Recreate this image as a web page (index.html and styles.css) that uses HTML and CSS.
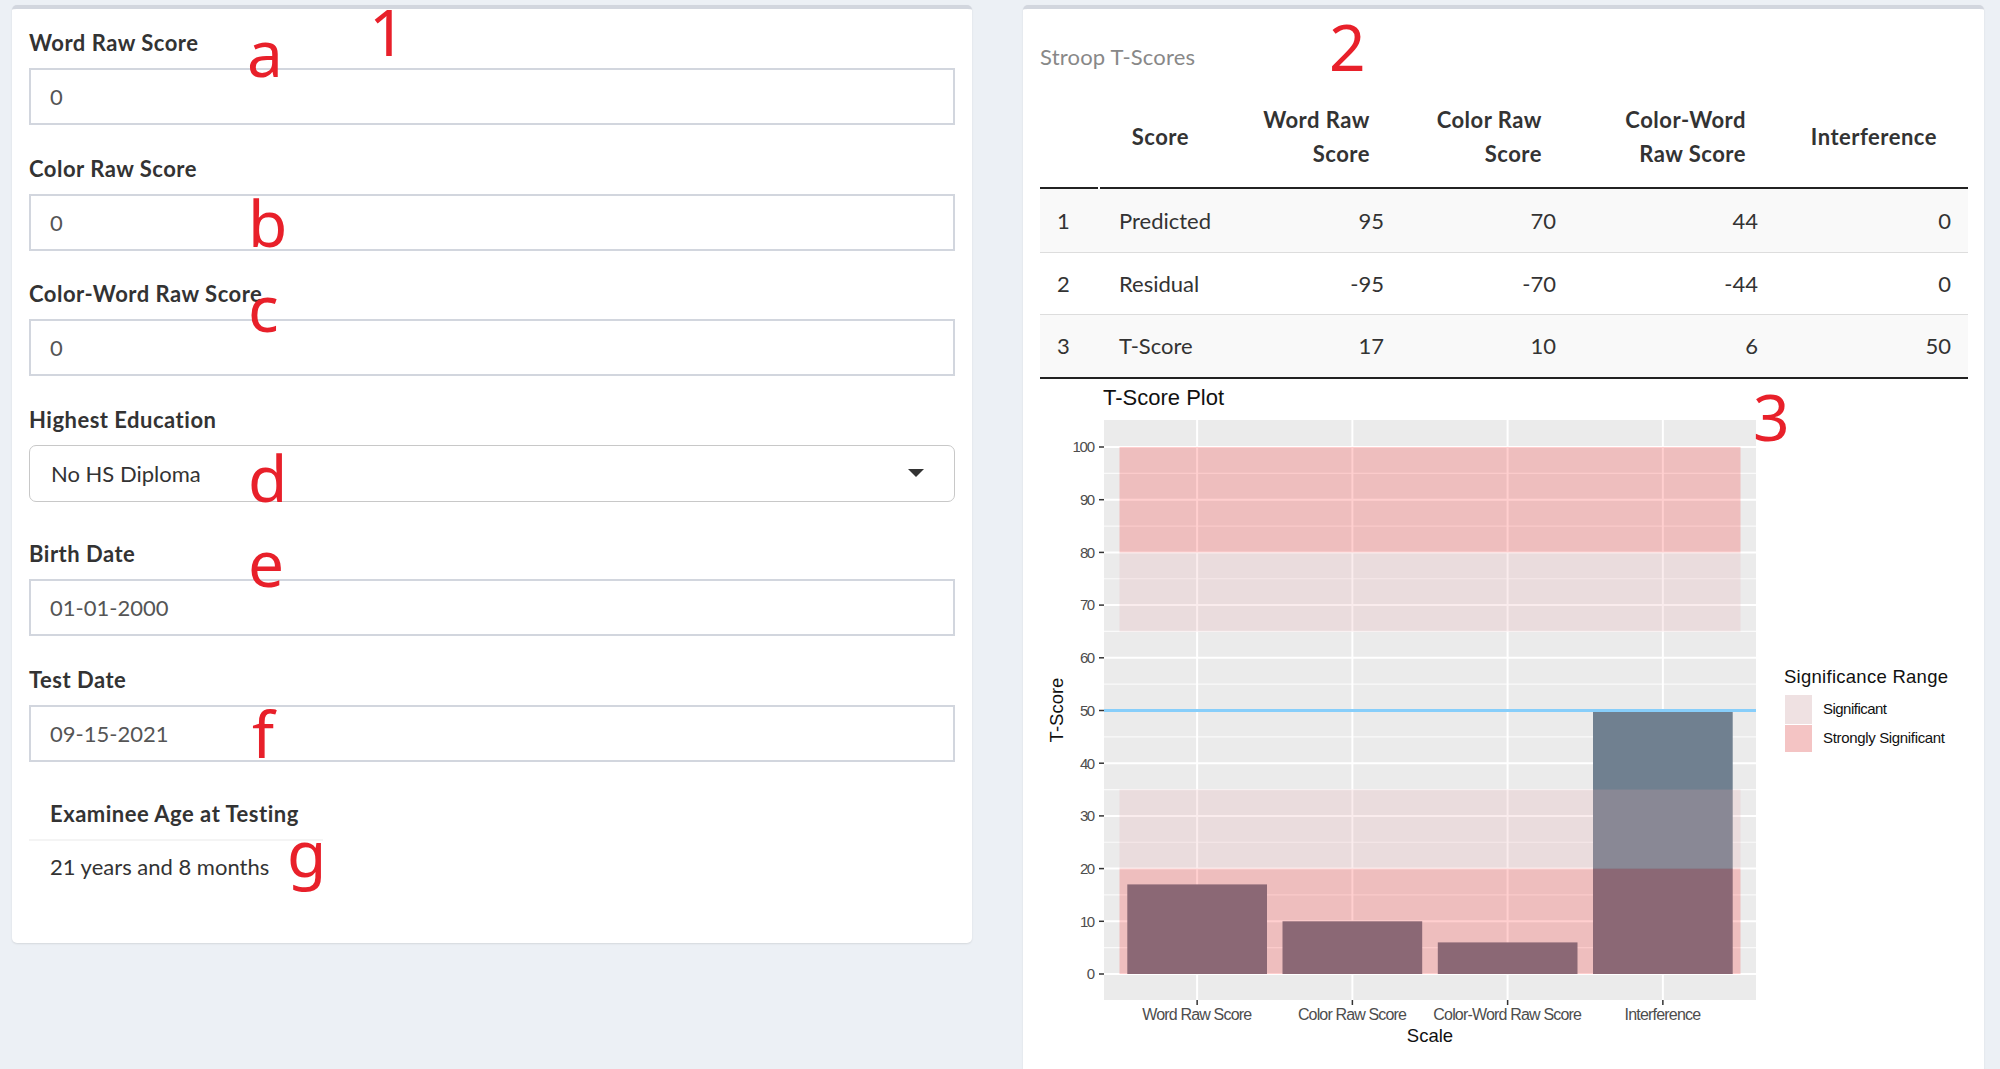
FILE: index.html
```html
<!DOCTYPE html>
<html lang="en">
<head>
<meta charset="utf-8">
<title>Stroop T-Scores</title>
<link rel="stylesheet" href="styles.css">
</head>
<body>
<div class="page">
  <section class="box box-left">
    <div class="field">
      <label class="field-label">Word Raw Score</label>
      <div class="input">0</div>
    </div>
    <div class="field">
      <label class="field-label">Color Raw Score</label>
      <div class="input">0</div>
    </div>
    <div class="field">
      <label class="field-label">Color-Word Raw Score</label>
      <div class="input">0</div>
    </div>
    <div class="field field-select">
      <label class="field-label">Highest Education</label>
      <div class="input select"><span>No HS Diploma</span><span class="caret"></span></div>
    </div>
    <div class="field">
      <label class="field-label">Birth Date</label>
      <div class="input">01-01-2000</div>
    </div>
    <div class="field field-last">
      <label class="field-label">Test Date</label>
      <div class="input">09-15-2021</div>
    </div>
    <table class="age-table">
      <thead><tr><th>Examinee Age at Testing</th></tr></thead>
      <tbody><tr><td>21 years and 8 months</td></tr></tbody>
    </table>
  </section>

  <section class="box box-right">
    <div class="caption">Stroop T-Scores</div>
    <div class="dt">
      <div class="trow thead">
        <div class="h0"></div>
        <div>Score</div>
        <div>Word Raw<br>Score</div>
        <div>Color Raw<br>Score</div>
        <div class="h4">Color-Word<br>Raw Score</div>
        <div>Interference</div>
      </div>
      <div class="trow tr r1">
        <div class="c-idx">1</div><div class="c-txt">Predicted</div>
        <div class="c-num">95</div><div class="c-num">70</div><div class="c-num">44</div><div class="c-num">0</div>
      </div>
      <div class="trow tr r2">
        <div class="c-idx">2</div><div class="c-txt">Residual</div>
        <div class="c-num">-95</div><div class="c-num">-70</div><div class="c-num">-44</div><div class="c-num">0</div>
      </div>
      <div class="trow tr r3">
        <div class="c-idx">3</div><div class="c-txt">T-Score</div>
        <div class="c-num">17</div><div class="c-num">10</div><div class="c-num">6</div><div class="c-num">50</div>
      </div>
    </div>
    <svg class="plot" viewBox="1040 379 928 690" width="928" height="690" xmlns="http://www.w3.org/2000/svg">
      <text class="p-title" x="1103" y="405">T-Score Plot</text>
      <rect x="1104" y="420" width="652" height="580" fill="#ebebeb"/>
      <g class="grid-minor">
        <line x1="1104" x2="1756" y1="947.65" y2="947.65"/>
        <line x1="1104" x2="1756" y1="894.95" y2="894.95"/>
        <line x1="1104" x2="1756" y1="842.25" y2="842.25"/>
        <line x1="1104" x2="1756" y1="789.55" y2="789.55"/>
        <line x1="1104" x2="1756" y1="736.85" y2="736.85"/>
        <line x1="1104" x2="1756" y1="684.15" y2="684.15"/>
        <line x1="1104" x2="1756" y1="631.45" y2="631.45"/>
        <line x1="1104" x2="1756" y1="578.75" y2="578.75"/>
        <line x1="1104" x2="1756" y1="526.05" y2="526.05"/>
        <line x1="1104" x2="1756" y1="473.35" y2="473.35"/>
      </g>
      <g class="grid-major">
        <line x1="1104" x2="1756" y1="974" y2="974"/>
        <line x1="1104" x2="1756" y1="921.3" y2="921.3"/>
        <line x1="1104" x2="1756" y1="868.6" y2="868.6"/>
        <line x1="1104" x2="1756" y1="815.9" y2="815.9"/>
        <line x1="1104" x2="1756" y1="763.2" y2="763.2"/>
        <line x1="1104" x2="1756" y1="710.5" y2="710.5"/>
        <line x1="1104" x2="1756" y1="657.8" y2="657.8"/>
        <line x1="1104" x2="1756" y1="605.1" y2="605.1"/>
        <line x1="1104" x2="1756" y1="552.4" y2="552.4"/>
        <line x1="1104" x2="1756" y1="499.7" y2="499.7"/>
        <line x1="1104" x2="1756" y1="447" y2="447"/>
        <line x1="1197.14" x2="1197.14" y1="420" y2="1000"/>
        <line x1="1352.38" x2="1352.38" y1="420" y2="1000"/>
        <line x1="1507.62" x2="1507.62" y1="420" y2="1000"/>
        <line x1="1662.86" x2="1662.86" y1="420" y2="1000"/>
      </g>
      <g fill="#708090">
        <rect x="1127.3" y="884.4" width="139.7" height="89.6"/>
        <rect x="1282.5" y="921.3" width="139.7" height="52.7"/>
        <rect x="1437.8" y="942.4" width="139.7" height="31.6"/>
        <rect x="1593.0" y="710.5" width="139.7" height="263.5"/>
      </g>
      <g class="band-strong">
        <rect x="1119.5" y="447" width="621" height="105.4"/>
        <rect x="1119.5" y="868.6" width="621" height="105.4"/>
      </g>
      <g class="band-sig">
        <rect x="1119.5" y="552.4" width="621" height="79.05"/>
        <rect x="1119.5" y="789.55" width="621" height="79.05"/>
      </g>
      <line x1="1104" x2="1756" y1="710.5" y2="710.5" stroke="#87cefa" stroke-width="3"/>
      <g class="ticks">
        <line x1="1099" x2="1104" y1="974" y2="974"/>
        <line x1="1099" x2="1104" y1="921.3" y2="921.3"/>
        <line x1="1099" x2="1104" y1="868.6" y2="868.6"/>
        <line x1="1099" x2="1104" y1="815.9" y2="815.9"/>
        <line x1="1099" x2="1104" y1="763.2" y2="763.2"/>
        <line x1="1099" x2="1104" y1="710.5" y2="710.5"/>
        <line x1="1099" x2="1104" y1="657.8" y2="657.8"/>
        <line x1="1099" x2="1104" y1="605.1" y2="605.1"/>
        <line x1="1099" x2="1104" y1="552.4" y2="552.4"/>
        <line x1="1099" x2="1104" y1="499.7" y2="499.7"/>
        <line x1="1099" x2="1104" y1="447" y2="447"/>
        <line x1="1197.14" x2="1197.14" y1="1000" y2="1005"/>
        <line x1="1352.38" x2="1352.38" y1="1000" y2="1005"/>
        <line x1="1507.62" x2="1507.62" y1="1000" y2="1005"/>
        <line x1="1662.86" x2="1662.86" y1="1000" y2="1005"/>
      </g>
      <g class="tick-y">
        <text x="1095" y="979.3" textLength="7.5">0</text>
        <text x="1095" y="926.6" textLength="15">10</text>
        <text x="1095" y="873.9" textLength="15">20</text>
        <text x="1095" y="821.2" textLength="15">30</text>
        <text x="1095" y="768.5" textLength="15">40</text>
        <text x="1095" y="715.8" textLength="15">50</text>
        <text x="1095" y="663.1" textLength="15">60</text>
        <text x="1095" y="610.4" textLength="15">70</text>
        <text x="1095" y="557.7" textLength="15">80</text>
        <text x="1095" y="505" textLength="15">90</text>
        <text x="1095" y="452.3" textLength="22.5">100</text>
      </g>
      <g class="tick-x">
        <text x="1197.14" y="1020" textLength="110">Word Raw Score</text>
        <text x="1352.38" y="1020" textLength="109">Color Raw Score</text>
        <text x="1507.62" y="1020" textLength="148.6">Color-Word Raw Score</text>
        <text x="1662.86" y="1020" textLength="76.6">Interference</text>
      </g>
      <text class="ax-title" x="1430" y="1042" text-anchor="middle">Scale</text>
      <text class="ax-title" transform="translate(1063 710) rotate(-90)" text-anchor="middle">T-Score</text>
      <text class="lg-title" x="1784" y="683" textLength="164">Significance Range</text>
      <rect x="1785" y="695" width="27" height="29" fill="#f2f2f2"/>
      <rect x="1785" y="695" width="27" height="29" class="band-sig-key"/>
      <rect x="1785" y="725" width="27" height="27" fill="#f2f2f2"/>
      <rect x="1785" y="725" width="27" height="27" class="band-strong-key"/>
      <text class="lg-label" x="1823" y="714" textLength="64">Significant</text>
      <text class="lg-label" x="1823" y="743" textLength="122">Strongly Significant</text>
    </svg>
  </section>

  <span class="annot an-1">1</span>
  <span class="annot an-a">a</span>
  <span class="annot an-b">b</span>
  <span class="annot an-c">c</span>
  <span class="annot an-d">d</span>
  <span class="annot an-e">e</span>
  <span class="annot an-f">f</span>
  <span class="annot an-g">g</span>
  <span class="annot an-2">2</span>
  <span class="annot an-3">3</span>
</div>
</body>
</html>
```
FILE: styles.css
```css
html, body {
  margin: 0;
  height: 1069px;
  overflow: hidden;
}
body {
  background: #ecf0f5;
  font-family: Lato, "Noto Sans", sans-serif;
  font-size: 22px;
  color: #333;
}
.page {
  position: relative;
  display: flex;
  align-items: flex-start;
  gap: 51px;
  padding: 5px 0 0 12px;
}
.box {
  background: #fff;
  border-top: 4px solid #d2d6de;
  border-radius: 5px;
  box-shadow: 0 1px 2px rgba(0, 0, 0, 0.1);
  box-sizing: border-box;
}
.box-left {
  width: 960px;
  padding: 21px 17px 51px;
}
.box-right {
  width: 961px;
  height: 1100px;
  padding: 34.5px 16px 0 17px;
}

/* form */
.field { margin-bottom: 30.5px; }
.field-select { margin-bottom: 39.5px; }
.field-last { margin-bottom: 26.5px; }
.field-label {
  display: block;
  font-weight: 700;
  font-size: 22px;
  line-height: 26px;
  letter-spacing: 0.5px;
  margin-bottom: 12px;
  color: #333;
}
.input {
  height: 57px;
  box-sizing: border-box;
  border: 2px solid #d2d6de;
  padding: 0 20px 0 19px;
  display: flex;
  align-items: center;
  font-size: 22px;
  color: #555;
}
.select {
  border: 1px solid #c8c8c8;
  border-radius: 7px;
  justify-content: space-between;
  padding: 0 30px 0 21px;
  color: #333;
}
.caret {
  width: 0;
  height: 0;
  border-left: 8.5px solid transparent;
  border-right: 8.5px solid transparent;
  border-top: 8px solid #333;
}

.age-table {
  width: 294px;
  border-collapse: collapse;
  font-size: 22px;
  line-height: 26px;
}
.age-table th {
  text-align: left;
  font-weight: 700;
  letter-spacing: 0.5px;
  padding: 12.5px 8px 12.5px 21px;
  border-bottom: 2px solid #f4f4f4;
  white-space: nowrap;
}
.age-table td {
  padding: 12.5px 21px;
  white-space: nowrap;
}

/* right table */
.caption {
  font-size: 22px;
  line-height: 26px;
  color: #888;
  letter-spacing: 0.2px;
  margin-bottom: 16.5px;
}
.trow {
  display: grid;
  grid-template-columns: 60px 120px 181px 172px 202px 193px;
  box-sizing: border-box;
  align-items: center;
}
.thead {
  height: 103px;
  font-weight: 700;
  letter-spacing: 0.5px;
  line-height: 34px;
  align-items: stretch;
}
.thead > div {
  display: flex;
  align-items: center;
  justify-content: flex-end;
  text-align: right;
  padding-right: 31px;
  border-bottom: 2px solid #222;
}
.thead > .h0 { margin-right: 2px; }
.thead > .h4 { padding-right: 29px; }
.tr {
  line-height: 26px;
}
.r1 { height: 64px; background: #f9f9f9; border-bottom: 1px solid #ddd; }
.r2 { height: 62px; border-bottom: 1px solid #ddd; }
.r3 { height: 64px; background: #f9f9f9; border-bottom: 2px solid #222; }
.c-idx { padding-left: 17px; }
.c-txt { padding-left: 19px; }
.c-num { text-align: right; padding-right: 17px; }

/* plot */
.plot {
  display: block;
  width: 928px;
  height: 690px;
  font-family: "Liberation Sans", Arial, sans-serif;
}
.p-title { font-size: 22px; fill: #111; }
.grid-minor line { stroke: #fafafa; stroke-width: 1.2; }
.grid-major line { stroke: #ffffff; stroke-width: 2; }
.band-strong rect, .band-strong-key { fill: rgba(255, 0, 0, 0.19); }
.band-sig rect, .band-sig-key { fill: rgba(230, 163, 168, 0.21); }
.ticks line { stroke: #333; stroke-width: 1.5; }
.tick-y text { font-size: 15px; fill: #4d4d4d; text-anchor: end; }
.tick-x text { font-size: 16px; fill: #4d4d4d; text-anchor: middle; }
.ax-title { font-size: 18.5px; fill: #111; }
.lg-title { font-size: 18.5px; fill: #111; }
.lg-label { font-size: 15px; fill: #111; }

/* red annotations */
.annot {
  position: absolute;
  font-family: "Noto Sans", sans-serif;
  font-size: 64px;
  line-height: 40px;
  color: #e8202a;
}
.an-1 { left: 369px; top: 12px; }
.an-a { left: 247px; top: 33px; }
.an-b { left: 248px; top: 203px; }
.an-c { left: 248px; top: 288px; }
.an-d { left: 248px; top: 458px; }
.an-e { left: 248px; top: 543px; }
.an-f { left: 252px; top: 714px; }
.an-g { left: 287px; top: 833px; }
.an-2 { left: 1329px; top: 27px; }
.an-3 { left: 1753px; top: 397px; }
```
